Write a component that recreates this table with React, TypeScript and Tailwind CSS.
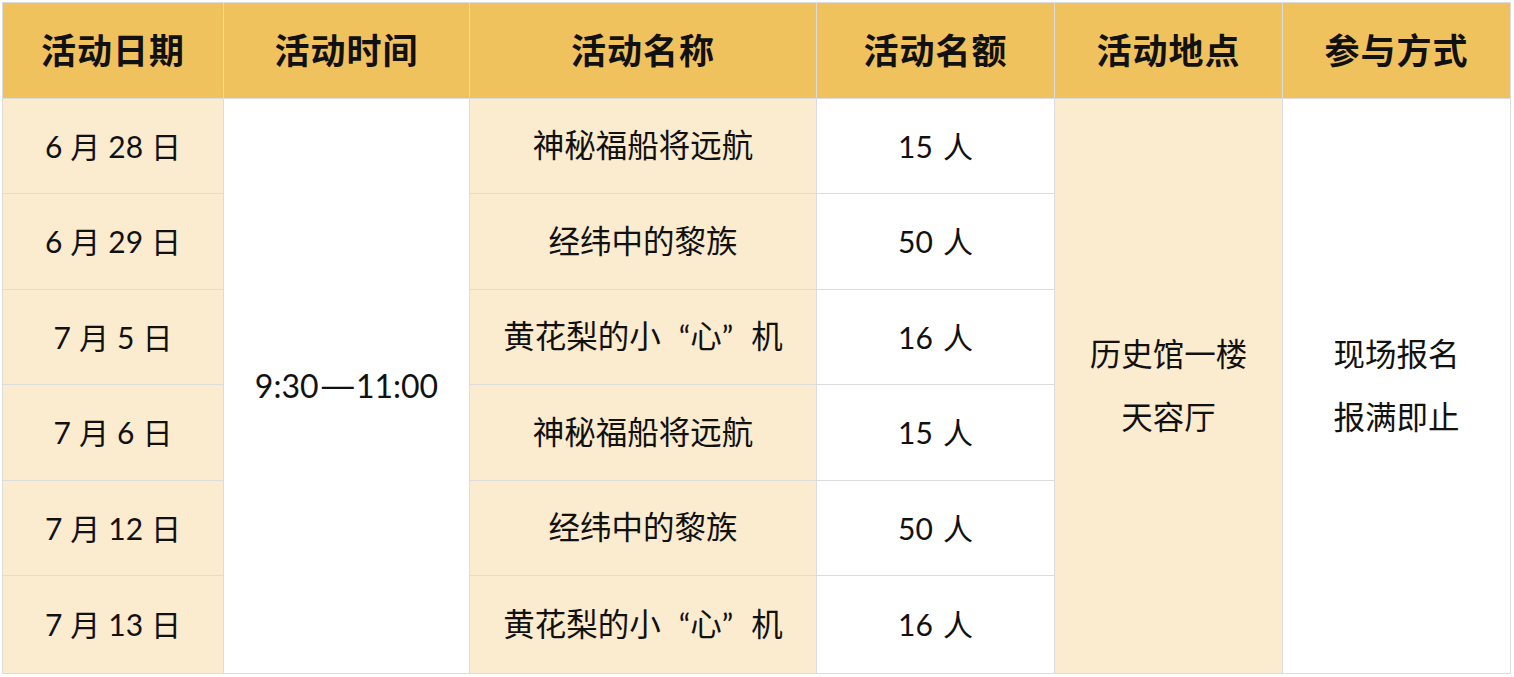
const rows = [
  { row: 'row-start-2', m: '6', d: '28', name: '神秘福船将远航', quota: '15' },
  { row: 'row-start-3', m: '6', d: '29', name: '经纬中的黎族', quota: '50' },
  { row: 'row-start-4', m: '7', d: '5', name: 'heart', quota: '16' },
  { row: 'row-start-5', m: '7', d: '6', name: '神秘福船将远航', quota: '15' },
  { row: 'row-start-6', m: '7', d: '12', name: '经纬中的黎族', quota: '50' },
  { row: 'row-start-7', m: '7', d: '13', name: 'heart', quota: '16' },
];

const headers = ['活动日期', '活动时间', '活动名称', '活动名额', '活动地点', '参与方式'];

function Name({ name }: { name: string }) {
  if (name !== 'heart') return <span>{name}</span>;
  return (
    <span>
      黄花梨的小<span className="pl-[18px]">“</span>心<span className="pr-[18px]">”</span>机
    </span>
  );
}

export default function App() {
  return (
    <div className="w-[1514px] h-[677px] bg-white pt-[2px] pl-[2px] font-['Lato','Noto_Sans_CJK_SC',sans-serif]">
      <div className="grid w-[1509px] gap-px bg-[#dcdcdc] p-px text-[#111] grid-cols-[220px_245px_346px_237px_227px_227px] grid-rows-[95px_94px_95px_94px_95px_94px_97px]">
        {headers.map((h) => (
          <div
            key={h}
            className="flex items-center justify-center bg-[#f0c25e] text-[35px] font-bold tracking-[1px]"
          >
            {h}
          </div>
        ))}

        {rows.map((r) => (
          <div
            key={'d' + r.row}
            className={`${r.row} col-start-1 flex items-center justify-center gap-[8px] bg-[#fbebcf] text-[30px]`}
          >
            <span>{r.m}</span>
            <span>月</span>
            <span>{r.d}</span>
            <span>日</span>
          </div>
        ))}

        <div className="col-start-2 row-start-2 row-span-6 flex items-center justify-center bg-white text-[32px]">
          9:30<span className="inline-block scale-x-150 px-[6px]">—</span>11:00
        </div>

        {rows.map((r) => (
          <div
            key={'n' + r.row}
            className={`${r.row} col-start-3 flex items-center justify-center bg-[#fbebcf] text-[31.5px]`}
          >
            <Name name={r.name} />
          </div>
        ))}

        {rows.map((r) => (
          <div
            key={'q' + r.row}
            className={`${r.row} col-start-4 flex items-center justify-center gap-[10px] bg-white text-[30px]`}
          >
            <span>{r.quota}</span>
            <span>人</span>
          </div>
        ))}

        <div className="col-start-5 row-start-2 row-span-6 flex flex-col items-center justify-center bg-[#fbebcf] text-[31.5px] leading-[63px]">
          <span>历史馆一楼</span>
          <span>天容厅</span>
        </div>

        <div className="col-start-6 row-start-2 row-span-6 flex flex-col items-center justify-center bg-white text-[31.5px] leading-[63px]">
          <span>现场报名</span>
          <span>报满即止</span>
        </div>
      </div>
    </div>
  );
}
